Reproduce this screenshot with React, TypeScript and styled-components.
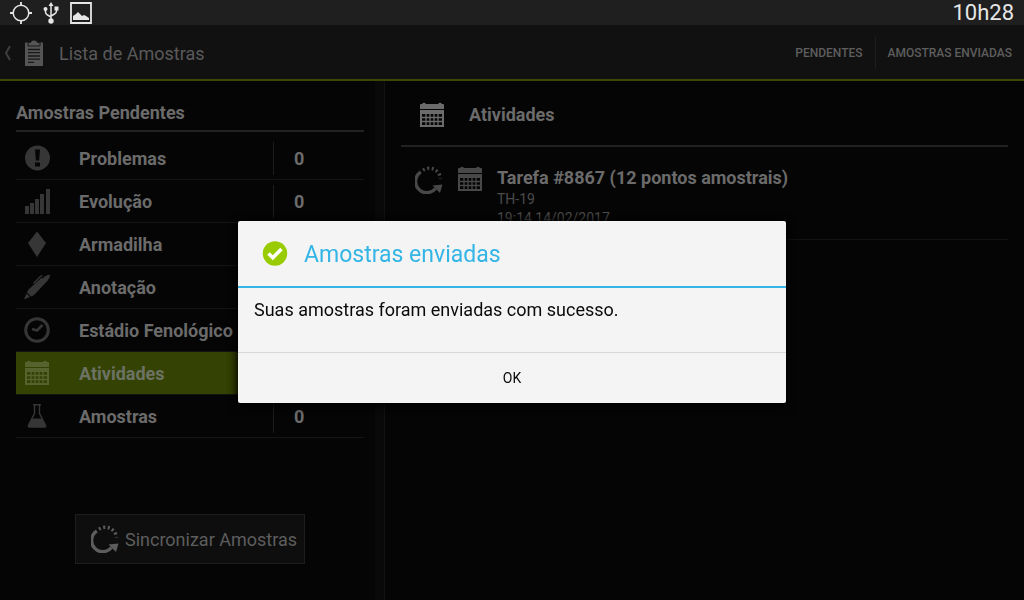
import React from "react";
import styled, { createGlobalStyle } from "styled-components";

const GlobalStyle = createGlobalStyle`
  *, *::before, *::after { box-sizing: border-box; }
  body {
    margin: 0;
    background: #050505;
    color: #6b6b6b;
    font-family: Roboto, "Liberation Sans", sans-serif;
    font-size: 18px;
  }
  h1, h2, p, ul { margin: 0; padding: 0; }
  ul { list-style: none; }
  button { font: inherit; color: inherit; background: none; border: 0; padding: 0; margin: 0; }
`;

const Screen = styled.div`
  display: flex;
  flex-direction: column;
  min-height: 100vh;
`;

const StatusBar = styled.header`
  display: flex;
  align-items: center;
  justify-content: space-between;
  height: 25px;
  padding: 0 10px;
  background: #1f1f1f;
  color: #e6e6e6;
`;

const StatusIcons = styled.div`
  display: flex;
  align-items: center;
  gap: 11px;
`;

const Clock = styled.time`
  font-size: 22px;
  line-height: 25px;
`;

const Icon = styled.svg<{ $size?: number }>`
  display: block;
  flex: none;
  width: ${(p) => p.$size ?? 26}px;
  height: ${(p) => p.$size ?? 26}px;
`;

const ActionBar = styled.nav`
  display: flex;
  align-items: center;
  height: 56px;
  padding-top: 2px;
  background: #111111;
  border-bottom: 2px solid #3a4a05;
`;

const UpButton = styled.button`
  display: flex;
  align-items: center;
  gap: 9px;
  padding: 0 0 0 4px;
  color: #555555;
`;

const ScreenTitle = styled.h1`
  flex: 1;
  margin-left: 12px;
  font-size: 18px;
  font-weight: 400;
  color: #5a5a5a;
`;

const ActionButton = styled.button`
  height: 32px;
  padding: 0 12px;
  font-size: 12px;
  font-weight: 500;
  color: #5e5e5e;

  & + & {
    border-left: 1px solid #1e1e1e;
  }
`;

const Content = styled.main`
  display: flex;
  flex: 1;
`;

const SidePanel = styled.section`
  display: flex;
  flex-direction: column;
  width: 385px;
  padding: 16px 20px 16px 16px;
  border-right: 1px solid #121212;
  background: linear-gradient(to left, #090909, #090909 9px, #050505 9px);
`;

const SideTitle = styled.h2`
  padding: 0 0 2px;
  margin-bottom: 5px;
  border-bottom: 2px solid #222222;
  font-size: 18px;
  line-height: 31px;
  font-weight: 700;
`;

const CategoryRow = styled.button<{ $active?: boolean }>`
  display: flex;
  align-items: center;
  width: 100%;
  height: 43px;
  padding-left: 8px;
  border-bottom: 1px solid #151515;
  background: ${(p) => (p.$active ? "#344203" : "transparent")};
  color: ${(p) => (p.$active ? "#56632f" : "#363636")};
  text-align: left;
`;

const CategoryName = styled.span<{ $active?: boolean }>`
  flex: 1;
  margin-left: 29px;
  font-weight: 700;
  color: ${(p) => (p.$active ? "#6c7264" : "#6b6b6b")};
`;

const Count = styled.span`
  width: 91px;
  padding-left: 20px;
  border-left: 1px solid #1c1c1c;
  line-height: 33px;
  font-weight: 700;
  color: #6b6b6b;
`;

const SyncButton = styled.button`
  display: flex;
  align-items: center;
  align-self: center;
  gap: 6px;
  height: 50px;
  margin-top: 76px;
  padding: 0 7px 0 15px;
  border: 1px solid #1d1d1d;
  background: #0e0e0e;
  color: #5d5d5d;
`;

const DetailPanel = styled.section`
  flex: 1;
  padding: 0 16px;
`;

const DetailHeader = styled.header`
  display: flex;
  align-items: center;
  gap: 24px;
  height: 66px;
  padding: 3px 0 0 18px;
  border-bottom: 2px solid #222222;
`;

const DetailTitle = styled.h2`
  font-size: 18px;
  font-weight: 700;
`;

const Task = styled.li`
  display: flex;
  height: 93px;
  padding: 19px 0 0 14px;
  border-bottom: 1px solid #121212;
  color: #484848;
`;

const TaskIcons = styled.div`
  display: flex;
  gap: 14px;
  margin-right: 14px;
`;

const TaskName = styled.p`
  line-height: 24px;
  font-weight: 700;
  color: #6b6b6b;
`;

const TaskInfo = styled.p`
  font-size: 14px;
  line-height: 19px;
  color: #4c4c4c;
`;

const Overlay = styled.div`
  position: fixed;
  inset: 24px 0 0;
  display: flex;
  align-items: center;
  justify-content: center;
`;

const Dialog = styled.section`
  width: 548px;
  max-width: 100%;
  border-radius: 2px;
  background: #f4f4f4;
  box-shadow: 0 1px 8px 2px #000000;
  color: #0a0a0a;
`;

const DialogHeader = styled.header`
  display: flex;
  align-items: center;
  gap: 16px;
  height: 67px;
  padding-left: 24px;
  border-bottom: 2px solid #33b5e5;
`;

const DialogTitle = styled.h2`
  padding-top: 2px;
  font-size: 23px;
  font-weight: 400;
  color: #33b5e5;
`;

const DialogMessage = styled.p`
  height: 64px;
  padding: 10px 16px;
  line-height: 24px;
`;

const DialogButton = styled.button`
  display: block;
  width: 100%;
  height: 51px;
  border-top: 1px solid #d8d8d8;
  font-size: 14px;
`;

const CalendarIcon = () => (
  <Icon viewBox="0 0 26 26" aria-hidden>
    <path d="M1 3q0-1 1-1h1q2-2.500 4 0h12q2-2.500 4 0h1q1 0 1 1v4H1z" fill="currentColor" />
    <path fillRule="evenodd" d="M1 8h24v17H1zM3 12v11h20V12z" fill="currentColor" />
    <path d="M7 12v11M11 12v11M15 12v11M19 12v11M3 15.500h20M3 19.500h20" stroke="currentColor" strokeWidth="1.300" />
  </Icon>
);

const SyncIcon = () => (
  <Icon $size={28} viewBox="0 0 28 28" aria-hidden fill="none" stroke="currentColor">
    <path d="M5.800 6A11.200 11.200 0 1 0 20.500 22.500" strokeWidth="3.400" />
    <path d="M7.200 4.800A11.200 11.200 0 0 1 25.500 12.500" strokeWidth="3.400" strokeDasharray="2 2.500" strokeDashoffset="-1" />
    <path d="M17.500 19.500L27.500 18.500L25 27z" fill="currentColor" stroke="none" />
  </Icon>
);

const categoryIcons: Record<string, React.ReactNode> = {
  Problemas: (
    <Icon viewBox="0 0 26 26" aria-hidden>
      <circle cx="13.5" cy="13" r="12.5" fill="currentColor" />
      <path d="M11 4.5h5l-.9 11h-3.2zM11 17.5h5v4h-5z" fill="#050505" />
    </Icon>
  ),
  "Evolução": (
    <Icon viewBox="0 0 26 26" fill="currentColor" aria-hidden>
      <path d="M1 18h4v8H1zM6 15h4v11H6zM11 11h4v15h-4zM16 6h4v20h-4zM22 1h4v25h-4z" />
    </Icon>
  ),
  Armadilha: (
    <Icon viewBox="0 0 26 26" fill="currentColor" aria-hidden>
      <path d="M13 .5L22 12l-9 14L4 12z" />
    </Icon>
  ),
  "Anotação": (
    <Icon viewBox="0 0 26 26" aria-hidden>
      <path d="M0 25.500L2.500 19.500L6 23z" fill="currentColor" />
      <path d="M3 18.500Q3.500 16.500 5 15L17.500 3.800l1.200 1L20 3Q24 .3 26 .8q.3 2.700-2.500 6L11.500 19.500Q9.500 21.800 7 22.500z" fill="currentColor" />
      <path d="M9.500 9.500L16.500 2.300q1-.8 2 .2" fill="none" stroke="currentColor" strokeWidth="1.300" />
    </Icon>
  ),
  "Estádio Fenológico": (
    <Icon viewBox="0 0 26 26" aria-hidden fill="none" stroke="currentColor">
      <circle cx="13" cy="13" r="11.300" strokeWidth="3" />
      <path d="M8 12l5 1.500L18.500 8" strokeWidth="2.600" />
    </Icon>
  ),
  Atividades: <CalendarIcon />,
  Amostras: (
    <Icon viewBox="0 0 26 26" aria-hidden>
      <path d="M9 1.800h8M10.500 2v8.500L4.500 22q-.8 2 1 2h15q1.800 0 1-2l-6-11.500V2" fill="none" stroke="currentColor" strokeWidth="1.400" />
      <path d="M8 15.500h10l4 8.500H4z" fill="currentColor" />
    </Icon>
  ),
};

const categories = [
  { name: "Problemas", count: 0 },
  { name: "Evolução", count: 0 },
  { name: "Armadilha", count: 0 },
  { name: "Anotação", count: 0 },
  { name: "Estádio Fenológico", count: 0 },
  { name: "Atividades" },
  { name: "Amostras", count: 0 },
];

export default function App() {
  const selected = "Atividades";
  return (
    <Screen>
      <GlobalStyle />
      <StatusBar>
        <StatusIcons>
          <Icon $size={22} viewBox="0 0 22 22" fill="none" stroke="currentColor" aria-hidden>
            <circle cx="11" cy="11" r="7.800" strokeWidth="1.500" />
            <path d="M11 0v4M11 18v4M0 11h4M18 11h4" strokeWidth="1.800" />
          </Icon>
          <Icon $size={16} viewBox="0 0 16 16" overflow="visible" fill="currentColor" aria-hidden>
            <path d="M8 0v16M2.500 4v3q0 2 2 3L8 12M13.500 3v3q0 2-2 3L8 11" fill="none" stroke="currentColor" strokeWidth="1.500" />
            <path d="M8-3l2.500 4h-5zM11.500 1.500h4v4h-4z" />
            <circle cx="2.500" cy="4" r="2" />
            <circle cx="8" cy="16" r="2.700" />
          </Icon>
          <Icon $size={22} viewBox="0 0 22 22" aria-hidden>
            <path d="M1 1h20v20H1z" fill="none" stroke="currentColor" strokeWidth="1.800" />
            <path d="M3 18v-4l3-2 2-2 4 4 2-1 2 1 3 2v2z" fill="currentColor" />
          </Icon>
        </StatusIcons>
        <Clock>10h28</Clock>
      </StatusBar>

      <ActionBar>
        <UpButton aria-label="Voltar">
          <svg width="8" height="16" viewBox="0 0 8 16" fill="none" stroke="#3f3f3f" strokeWidth="2" aria-hidden>
            <path d="M6 1L2 8l4 7" />
          </svg>
          <Icon viewBox="0 0 26 26" aria-hidden>
            <path d="M4 2.500h18V26H4z" fill="currentColor" />
            <path d="M7 2.500h2.500q.5-2.500 3.500-2.500t3.500 2.500H19V6H7z" fill="currentColor" stroke="#191919" />
            <path d="M7 9.500h12M7 12.700h12M7 16h12M7 19.200h12M7 22.300h6" stroke="#191919" strokeWidth="1.300" />
          </Icon>
        </UpButton>
        <ScreenTitle>Lista de Amostras</ScreenTitle>
        <ActionButton>PENDENTES</ActionButton>
        <ActionButton>AMOSTRAS ENVIADAS</ActionButton>
      </ActionBar>

      <Content>
        <SidePanel>
          <SideTitle>Amostras Pendentes</SideTitle>
          <ul>
            {categories.map(({ name, count }) => (
              <li key={name}>
                <CategoryRow $active={name === selected}>
                  {categoryIcons[name]}
                  <CategoryName $active={name === selected}>{name}</CategoryName>
                  {count !== undefined && <Count>{count}</Count>}
                </CategoryRow>
              </li>
            ))}
          </ul>
          <SyncButton>
            <SyncIcon />
            Sincronizar Amostras
          </SyncButton>
        </SidePanel>

        <DetailPanel>
          <DetailHeader>
            <CalendarIcon />
            <DetailTitle>Atividades</DetailTitle>
          </DetailHeader>
          <ul>
            <Task>
              <TaskIcons>
                <SyncIcon />
                <CalendarIcon />
              </TaskIcons>
              <div>
                <TaskName>Tarefa #8867 (12 pontos amostrais)</TaskName>
                <TaskInfo>TH-19</TaskInfo>
                <TaskInfo>19:14 14/02/2017</TaskInfo>
              </div>
            </Task>
          </ul>
        </DetailPanel>
      </Content>

      <Overlay>
        <Dialog role="dialog" aria-modal="true" aria-labelledby="dialog-title">
          <DialogHeader>
            <Icon viewBox="0 0 26 26" aria-hidden>
              <circle cx="13" cy="12.500" r="12.200" fill="#99cc00" />
              <path d="M6.500 12.500l4.300 4.200L19.500 8" fill="none" stroke="#ffffff" strokeWidth="3.600" />
            </Icon>
            <DialogTitle id="dialog-title">Amostras enviadas</DialogTitle>
          </DialogHeader>
          <DialogMessage>Suas amostras foram enviadas com sucesso.</DialogMessage>
          <DialogButton>OK</DialogButton>
        </Dialog>
      </Overlay>
    </Screen>
  );
}
